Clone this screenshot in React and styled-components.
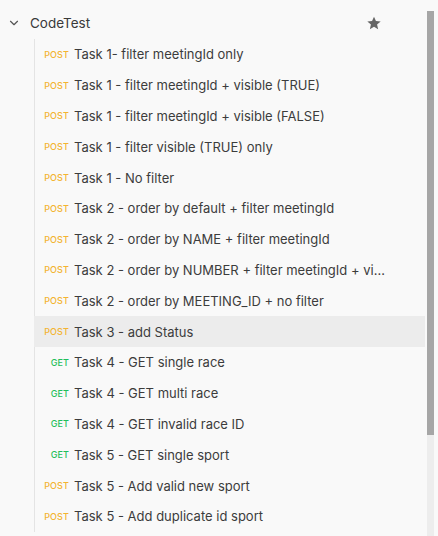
import React from 'react';
import styled, { createGlobalStyle } from 'styled-components';
import { ChevronDown } from 'lucide-react';

const GlobalStyle = createGlobalStyle`
  body {
    margin: 0;
    background: #f9f9f9;
    font-family: Inter, "Noto Sans", sans-serif;
  }
`;

const Page = styled.div`
  display: flex;
  width: 438px;
  height: 536px;
  overflow: hidden;
  background: #f9f9f9;
`;

const Tree = styled.div`
  width: 426px;
  flex-shrink: 0;
`;

const Header = styled.div`
  display: flex;
  align-items: center;
  height: 32px;
  margin-top: 7px;
  padding-left: 7px;
  color: #3a3a3a;
  font-size: 13.5px;
`;

const Chevron = styled.span`
  display: flex;
  width: 14px;
  margin-right: 9px;
  color: #555;
`;

const Title = styled.span`
  flex: 1;
`;

const Star = styled.svg`
  width: 16px;
  height: 16px;
  margin-right: 44px;
  fill: #666;
`;

const Children = styled.div`
  margin-left: 34px;
  border-left: 1px solid #e4e4e4;
  width: 390px;
`;

const Row = styled.div`
  display: flex;
  align-items: center;
  height: 30.8px;
  background: ${p => (p.$active ? '#ececec' : 'transparent')};
  margin-left: ${p => (p.$active ? '-1px' : '0')};
  padding-left: ${p => (p.$active ? '1px' : '0')};
`;

const Method = styled.span`
  width: 34px;
  text-align: right;
  font-size: 9px;
  font-weight: 500;
  letter-spacing: 0.1px;
  color: ${p => (p.$type === 'GET' ? '#1fbf5c' : '#f3b431')};
  margin-right: 5px;
`;

const Name = styled.span`
  flex: 1;
  min-width: 0;
  font-size: 13px;
  color: #3c3c3c;
  white-space: nowrap;
  overflow: hidden;
  text-overflow: ellipsis;
  padding-right: 36px;
`;

const Scroll = styled.div`
  display: flex;
  flex-direction: column;
  width: 9px;
  padding-top: 11px;
  padding-left: 1px;
`;

const Thumb = styled.div`
  width: 7px;
  height: 424px;
  background: #a6a6a6;
`;

const Track = styled.div`
  flex: 1;
  width: 7px;
  background: #ededed;
`;

const requests = [
  ['POST', 'Task 1- filter meetingId only'],
  ['POST', 'Task 1 - filter meetingId + visible (TRUE)'],
  ['POST', 'Task 1 - filter meetingId + visible (FALSE)'],
  ['POST', 'Task 1 - filter visible (TRUE) only'],
  ['POST', 'Task 1 - No filter'],
  ['POST', 'Task 2 - order by default + filter meetingId'],
  ['POST', 'Task 2 - order by NAME + filter meetingId'],
  ['POST', 'Task 2 - order by NUMBER + filter meetingId + visible'],
  ['POST', 'Task 2 - order by MEETING_ID + no filter'],
  ['POST', 'Task 3 - add Status', true],
  ['GET', 'Task 4 - GET single race'],
  ['GET', 'Task 4 - GET multi race'],
  ['GET', 'Task 4 - GET invalid race ID'],
  ['GET', 'Task 5 - GET single sport'],
  ['POST', 'Task 5 - Add valid new sport'],
  ['POST', 'Task 5 - Add duplicate id sport'],
];

export default function App() {
  return (
    <>
      <GlobalStyle />
      <Page>
        <Tree>
          <Header>
            <Chevron><ChevronDown size={14} strokeWidth={2} /></Chevron>
            <Title>CodeTest</Title>
            <Star viewBox="0 0 24 24">
              <path d="M12 2.5l2.9 6.6 7.1.6-5.4 4.7 1.6 7-6.2-3.7-6.2 3.7 1.6-7L2 9.7l7.1-.6z" />
            </Star>
          </Header>
          <Children>
            {requests.map(([type, name, active]) => (
              <Row key={name} $active={active}>
                <Method $type={type}>{type}</Method>
                <Name>{name}</Name>
              </Row>
            ))}
          </Children>
        </Tree>
        <Scroll>
          <Thumb />
          <Track />
        </Scroll>
      </Page>
    </>
  );
}
